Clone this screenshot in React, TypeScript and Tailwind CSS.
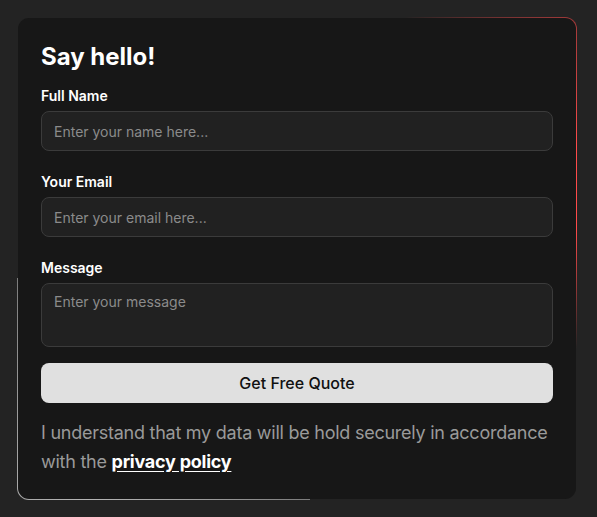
import React from "react";

const font = { fontFamily: "Inter, 'Liberation Sans', sans-serif" };

interface FieldProps {
  label:       string;
  placeholder: string;
  multiline?:  boolean;
}

function Field({ label, placeholder, multiline = false }: FieldProps) {
  const base =
    "block w-full rounded-lg border border-[#3b3b3b] bg-[#212121] px-3 text-sm text-white outline-none placeholder:text-[#8b8b8b]";
  return (
    <label className="block">
      <span className="mb-[5px] block text-sm leading-5 font-semibold text-white">
        {label}
      </span>
      {multiline ? (
        <textarea
          placeholder={placeholder}
          className={`${base} h-16 resize-none py-2 leading-5`}
        />
      ) : (
        <input placeholder={placeholder} className={`${base} h-10`} />
      )}
    </label>
  );
}

export default function App() {
  return (
    <div className="min-h-[517px] bg-[#232323] p-[17px]" style={font}>
      <div
        className="w-[560px] rounded-xl p-px
          bg-[conic-gradient(from_0deg,transparent_0deg,transparent_24deg,#ff4a4a_68deg,#ff4a4a_84deg,transparent_108deg,transparent_177deg,#7c7c7c_177deg,#b4b4b4_221deg,#7c7c7c_266deg,transparent_266deg)]"
      >
        <div className="rounded-[11px] bg-[#171717] px-[23px] pt-[23px] pb-[23px]">
          <h1 className="mb-[13px] text-2xl leading-8 font-bold text-white">
            Say hello!
          </h1>

          <div className="flex flex-col gap-[21px]">
            <Field label="Full Name" placeholder="Enter your name here..." />
            <Field label="Your Email" placeholder="Enter your email here..." />
            <Field label="Message" placeholder="Enter your message" multiline />
          </div>

          <button
            type="button"
            className="mt-4 h-10 w-full rounded-lg bg-[#e0e0e0] text-base font-medium text-[#111]"
          >
            Get Free Quote
          </button>

          <p className="mt-[15px] text-lg leading-[29px] tracking-[-0.25px] text-[#9a9a9a]">
            I understand that my data will be hold securely in accordance with
            the{" "}
            <a href="#" className="font-bold text-white underline underline-offset-[3px]">
              privacy policy
            </a>
          </p>
        </div>
      </div>
    </div>
  );
}
